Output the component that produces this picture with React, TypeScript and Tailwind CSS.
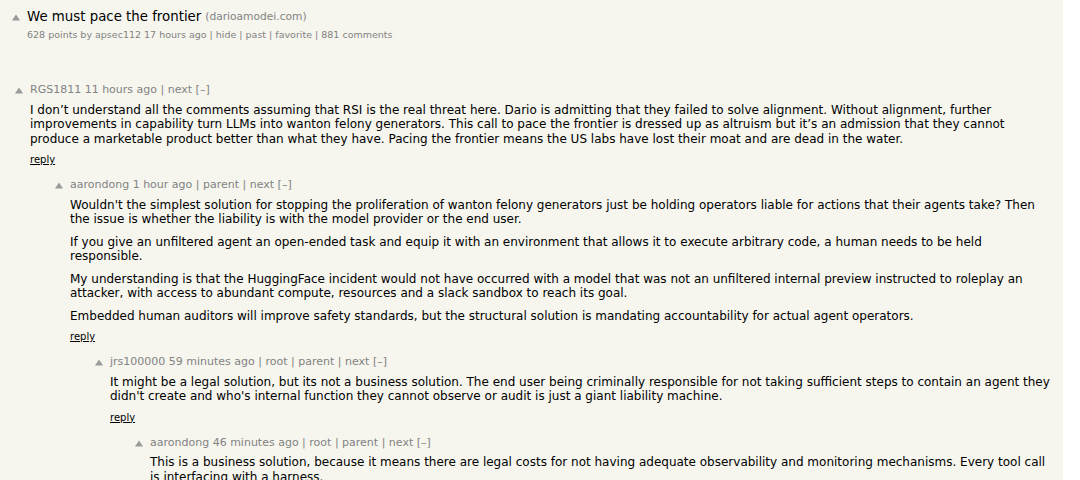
import React from 'react';

const FONT = { fontFamily: 'Verdana, "DejaVu Sans", Geneva, sans-serif' };

interface CommentData {
  level: number;
  user: string;
  age: string;
  links: string[];
  paragraphs: string[];
}

const comments: CommentData[] = [
  {
    level: 0,
    user: 'RGS1811',
    age: '11 hours ago',
    links: ['next [–]'],
    paragraphs: [
      'I don’t understand all the comments assuming that RSI is the real threat here. Dario is admitting that they failed to solve alignment. Without alignment, further improvements in capability turn LLMs into wanton felony generators. This call to pace the frontier is dressed up as altruism but it’s an admission that they cannot produce a marketable product better than what they have. Pacing the frontier means the US labs have lost their moat and are dead in the water.',
    ],
  },
  {
    level: 1,
    user: 'aarondong',
    age: '1 hour ago',
    links: ['parent', 'next [–]'],
    paragraphs: [
      "Wouldn't the simplest solution for stopping the proliferation of wanton felony generators just be holding operators liable for actions that their agents take? Then the issue is whether the liability is with the model provider or the end user.",
      'If you give an unfiltered agent an open-ended task and equip it with an environment that allows it to execute arbitrary code, a human needs to be held responsible.',
      'My understanding is that the HuggingFace incident would not have occurred with a model that was not an unfiltered internal preview instructed to roleplay an attacker, with access to abundant compute, resources and a slack sandbox to reach its goal.',
      'Embedded human auditors will improve safety standards, but the structural solution is mandating accountability for actual agent operators.',
    ],
  },
  {
    level: 2,
    user: 'jrs100000',
    age: '59 minutes ago',
    links: ['root', 'parent', 'next [–]'],
    paragraphs: [
      "It might be a legal solution, but its not a business solution. The end user being criminally responsible for not taking sufficient steps to contain an agent they didn't create and who's internal function they cannot observe or audit is just a giant liability machine.",
    ],
  },
  {
    level: 3,
    user: 'aarondong',
    age: '46 minutes ago',
    links: ['root', 'parent', 'next [–]'],
    paragraphs: [
      'This is a business solution, because it means there are legal costs for not having adequate observability and monitoring mechanisms. Every tool call is interfacing with a harness.',
    ],
  },
];

const indents = ['pl-[15px]', 'pl-[55px]', 'pl-[95px]', 'pl-[135px]'];

function VoteArrow() {
  return (
    <svg width="8" height="7" viewBox="0 0 8 7" className="block">
      <polygon points="4,0.5 8,6.5 0,6.5" fill="#9a9a9a" />
    </svg>
  );
}

function Comment({ c }: { c: CommentData }) {
  return (
    <div className={`flex ${indents[c.level]} mt-[12px]`}>
      <div className="w-[15px] shrink-0 pt-[4px]">
        <VoteArrow />
      </div>
      <div className="flex-1 min-w-0">
        {/* comment head */}
        <div className="h-[14px] flex items-center text-[11px] text-[#828282] whitespace-nowrap">
          {c.user} {c.age}
          {c.links.map((l) => (
            <span key={l}>&nbsp;|&nbsp;{l}</span>
          ))}
        </div>
        {/* comment body */}
        <div className="mt-[5.5px] text-[12px] leading-[14.5px] text-black">
          {c.paragraphs.map((p, i) => (
            <p key={i} className={i > 0 ? 'mt-[8px]' : ''}>
              {p}
            </p>
          ))}
        </div>
        <div className="mt-[8px] h-[12px] leading-[12px] text-[10px] text-black underline">reply</div>
      </div>
    </div>
  );
}

export default function App() {
  return (
    <div className="h-[480px] w-[1080px] overflow-hidden bg-white" style={FONT}>
      <div className="w-[1063px] h-full bg-[#f6f6ef] pr-[8px]">
        {/* Story header */}
        <div className="flex pl-[12px] pt-[9px]">
          <div className="w-[15px] shrink-0 pt-[5px]">
            <VoteArrow />
          </div>
          <div>
            <div className="h-[16px] flex items-center whitespace-nowrap">
              <span className="text-[13.33px] text-black">We must pace the frontier</span>
              <span className="text-[10.67px] text-[#828282] ml-[4px]">(darioamodei.com)</span>
            </div>
            <div className="mt-[3px] text-[9.5px] text-[#828282] whitespace-nowrap">
              628 points by apsec112 17 hours ago | hide | past | favorite | 881 comments
            </div>
          </div>
        </div>

        <div className="h-[29px]" />

        {comments.map((c, i) => (
          <Comment key={i} c={c} />
        ))}
      </div>
    </div>
  );
}
